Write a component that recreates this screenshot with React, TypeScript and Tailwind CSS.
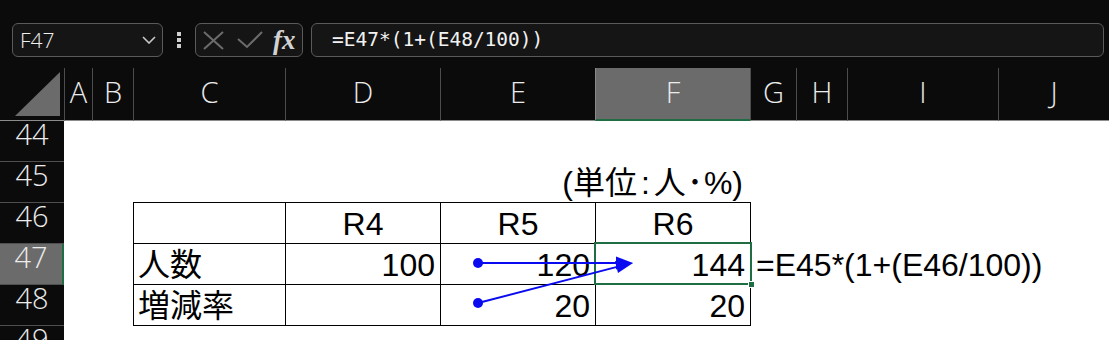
import React from 'react';

const cols = [
  { l: 'A', c: 'w-[28px]' },
  { l: 'B', c: 'w-[41px]' },
  { l: 'C', c: 'w-[152px]' },
  { l: 'D', c: 'w-[155px]' },
  { l: 'E', c: 'w-[155px]' },
  { l: 'F', c: 'w-[155px]', sel: true },
  { l: 'G', c: 'w-[46px]' },
  { l: 'H', c: 'w-[51px]' },
  { l: 'I', c: 'w-[151px]' },
  { l: 'J', c: 'flex-1' },
];

const rows = [44, 45, 46, 47, 48, 49];

const cellFont = "font-['Liberation_Sans','Noto_Sans_CJK_JP',sans-serif] text-[32px] text-black";

function Cell({ children, align = 'right' }: { children?: React.ReactNode; align?: 'left' | 'right' | 'center' }) {
  const j = align === 'left' ? 'justify-start pl-[4px]' : align === 'center' ? 'justify-center' : 'justify-end pr-[5px]';
  return (
    <div className={`h-[41px] border-r border-b border-black flex items-end ${j}`}>
      <span className={`${cellFont} leading-[37px] whitespace-nowrap`}>{children}</span>
    </div>
  );
}

export default function App() {
  return (
    <div className="relative w-[1109px] h-[340px] overflow-hidden bg-white">
      {/* Formula bar */}
      <div className="h-[68px] bg-[#0b0b0b] flex items-start pt-[23px] pl-[12px] pr-[5px]">
        <div className="w-[151px] h-[34px] rounded-[6px] border border-[#5a5a5a] bg-[#151515] flex items-center justify-between pl-[7px] pr-[6px]">
          <span className="font-['Open_Sans','Noto_Sans',sans-serif] font-light text-[21px] leading-none text-[#f0f0f0]">F47</span>
          <svg width="14" height="8" viewBox="0 0 14 8" fill="none">
            <polyline points="1,1 7,7 13,1" stroke="#c8c8c8" strokeWidth="1.6" />
          </svg>
        </div>
        <div className="w-[32px] h-[34px] flex flex-col items-center justify-center gap-[2px]">
          <div className="w-[4px] h-[4px] bg-[#cfcfcf]" />
          <div className="w-[4px] h-[4px] bg-[#cfcfcf]" />
          <div className="w-[4px] h-[4px] bg-[#cfcfcf]" />
        </div>
        <div className="w-[108px] h-[34px] rounded-[6px] border border-[#5a5a5a] bg-[#151515] flex items-center pl-[7px]">
          <svg width="21" height="19" viewBox="0 0 21 19" fill="none">
            <line x1="1" y1="1" x2="20" y2="18" stroke="#6c6c6c" strokeWidth="2" />
            <line x1="20" y1="1" x2="1" y2="18" stroke="#6c6c6c" strokeWidth="2" />
          </svg>
          <svg className="ml-[13px]" width="26" height="18" viewBox="0 0 26 18" fill="none">
            <polyline points="1,8 10,16 25,1" stroke="#6c6c6c" strokeWidth="2" />
          </svg>
          <span className="ml-[10px] font-['Liberation_Serif',serif] italic font-bold text-[27px] leading-none text-[#d2d2d2]">fx</span>
        </div>
        <div className="ml-[8px] flex-1 h-[34px] rounded-[6px] border border-[#5a5a5a] bg-[#151515] flex items-center pl-[20px]">
          <span className="font-['DejaVu_Sans_Mono',monospace] text-[19.5px] leading-none text-[#f2f2f2] whitespace-nowrap">=E47*(1+(E48/100))</span>
        </div>
      </div>

      {/* Column headers */}
      <div className="flex h-[53px] bg-[#0b0b0b]">
        <div className="w-[64px] h-[53px] border-b border-[#8c8c8c] flex items-end justify-end pr-[3px] pb-[4px]">
          <svg width="46" height="44" viewBox="0 0 46 44">
            <polygon points="0,44 45,0 45,44" fill="#6b6b6b" />
          </svg>
        </div>
        {cols.map((c) => (
          <div
            key={c.l}
            className={`${c.c} h-[53px] border-l flex justify-center pt-[9px] ${
              c.sel ? 'bg-[#6b6b6b] border-[#8a8a8a] border-b-2 border-b-[#1f6e43]' : 'border-[#4c4c4c] border-b border-b-[#8c8c8c]'
            }`}
          >
            <span className="font-['Open_Sans','Noto_Sans',sans-serif] font-light text-[29px] leading-[29px] text-[#ececec]">{c.l}</span>
          </div>
        ))}
      </div>

      {/* Body */}
      <div className="flex">
        <div className="w-[64px] flex flex-col bg-[#0b0b0b]">
          {rows.map((r) => (
            <div
              key={r}
              className={`h-[41px] shrink-0 border-b border-[#4f4f4f] flex justify-center ${
                r === 47 ? 'bg-[#6b6b6b] border-r-2 border-r-[#1f6e43]' : ''
              }`}
            >
              <span className="font-['Open_Sans','Noto_Sans',sans-serif] font-light text-[29px] leading-[26px] text-[#ececec]">{r}</span>
            </div>
          ))}
        </div>

        <div className="flex-1 pl-[69px]">
          <div className="h-[40px]" />
          <div className="w-[618px] h-[41px] flex items-end justify-end pr-[8px]">
            <span className={`${cellFont} leading-[37px] whitespace-nowrap`}>
              (単位<span className="mx-[4px]">:</span>人<span className="mx-[1px]">･</span>%)
            </span>
          </div>
          <div className="flex">
            <div className="grid grid-cols-[152px_155px_155px_155px] border-l border-t border-black">
              <Cell />
              <Cell align="center">R4</Cell>
              <Cell align="center">R5</Cell>
              <Cell align="center">R6</Cell>
              <Cell align="left">人数</Cell>
              <Cell>100</Cell>
              <Cell>120</Cell>
              <Cell>144</Cell>
              <Cell align="left">増減率</Cell>
              <Cell />
              <Cell>20</Cell>
              <Cell>20</Cell>
            </div>
            <div className="ml-[5px] flex flex-col">
              <div className="h-[42px]" />
              <div className="h-[40px] flex items-end">
                <span className={`${cellFont} leading-[37px] whitespace-nowrap`}>=E45*(1+(E46/100))</span>
              </div>
            </div>
          </div>
        </div>
      </div>

      {/* Selection */}
      <div className="absolute left-[594px] top-[242px] w-[158px] h-[43px] border-2 border-[#1f6e43]" />
      <div className="absolute left-[748px] top-[281px] w-[7px] h-[7px] bg-[#1f6e43] border border-white" />

      {/* Trace precedents arrows */}
      <svg className="absolute left-0 top-0 pointer-events-none" width="1109" height="340" viewBox="0 0 1109 340">
        <line x1="478" y1="263" x2="618" y2="263" stroke="#0a0af0" strokeWidth="2" />
        <polygon points="616,256.5 633,263 616,269.5" fill="#0a0af0" />
        <line x1="478" y1="303" x2="618" y2="266.6" stroke="#0a0af0" strokeWidth="2" />
        <polygon points="615,261 633,263 618,273" fill="#0a0af0" />
        <circle cx="478" cy="263" r="5" fill="#0a0af0" />
        <circle cx="478" cy="303" r="5" fill="#0a0af0" />
      </svg>
    </div>
  );
}
